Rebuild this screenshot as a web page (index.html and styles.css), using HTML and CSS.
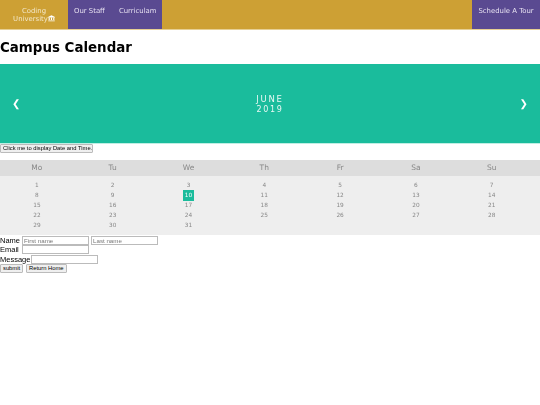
FILE: index.html
```html
<!DOCTYPE html>
<html lang="en">
<head>
<meta charset="utf-8">
<title>Campus Calendar</title>
<link rel="stylesheet" href="styles.css">
</head>
<body>
<nav class="nav">
  <a class="brand" href="#">Coding<br>University<svg class="bank" viewBox="0 0 16 14" width="7" height="6.5" aria-hidden="true"><path d="M8 0 L16 4 V5 H0 V4 Z M1.5 6 H4 V11 H1.5 Z M6.7 6 H9.3 V11 H6.7 Z M12 6 H14.5 V11 H12 Z M0.5 12 H15.5 V14 H0.5 Z"/></svg></a>
  <div class="links">
    <a href="#">Our Staff</a>
    <a href="#">Curriculam</a>
  </div>
  <div class="tour"><a href="#">Schedule A Tour</a></div>
</nav>
<h1 class="title">Campus Calendar</h1>
<section class="month">
  <span class="arrow">&#10094;</span>
  <div class="month-name">JUNE<br><span class="year">2019</span></div>
  <span class="arrow">&#10095;</span>
</section>
<button class="btn wide" type="button">Click me to display Date and Time.</button>
<div class="cal-days">
  <span>Mo</span><span>Tu</span><span>We</span><span>Th</span><span>Fr</span><span>Sa</span><span>Su</span>
</div>
<div class="cal-grid">
  <span>1</span><span>2</span><span>3</span><span>4</span><span>5</span><span>6</span><span>7</span>
  <span>8</span><span>9</span><span><b class="today">10</b></span><span>11</span><span>12</span><span>13</span><span>14</span>
  <span>15</span><span>16</span><span>17</span><span>18</span><span>19</span><span>20</span><span>21</span>
  <span>22</span><span>23</span><span>24</span><span>25</span><span>26</span><span>27</span><span>28</span>
  <span>29</span><span>30</span><span>31</span>
</div>
<form class="form">
  <div class="row"><label class="lbl lbl-name">Name</label><input class="field" placeholder="First name"><input class="field next" placeholder="Last name"></div>
  <div class="row"><label class="lbl lbl-email">Email</label><input class="field"></div>
  <div class="row"><label class="lbl lbl-msg">Message</label><input class="field"></div>
  <div class="row actions"><button class="btn" type="button">submit</button><button class="btn" type="button">Return Home</button></div>
</form>
</body>
</html>
```
FILE: styles.css
```css
* { box-sizing: border-box; }
body {
  margin: 0;
  font-family: "DejaVu Sans", sans-serif;
  background: #fff;
  color: #000;
  opacity: 0.999;
}
a { color: inherit; text-decoration: none; }
.nav {
  display: flex;
  height: 30px;
  background: #cda034;
  border-bottom: 1px solid #e6cf94;
  color: #e6e0f0;
  font-size: 6.9px;
  line-height: 11px;
}
.brand {
  width: 68px;
  padding-top: 7px;
  text-align: center;
  line-height: 8px;
  color: #f3e7c8;
}
.bank { fill: #fff; vertical-align: -0.5px; }
.links {
  display: flex;
  width: 94px;
  background: #5a4a91;
  padding: 6px 0 0 6px;
  gap: 14px;
}
.tour {
  margin-left: auto;
  width: 68px;
  background: #5a4a91;
  padding-top: 6px;
  text-align: center;
}
.title {
  margin: 0;
  height: 34px;
  padding-top: 9px;
  font-size: 13.4px;
  line-height: 18px;
  font-weight: 700;
}
.month {
  display: flex;
  justify-content: space-between;
  align-items: center;
  height: 80px;
  padding: 0 12px 1px;
  background: #1abc9c;
  border-bottom: 1px solid #bfeee3;
  color: #fff;
}
.arrow { font-size: 10px; }
.month-name {
  padding-top: 2px;
  font-size: 8.5px;
  line-height: 10px;
  letter-spacing: 1.7px;
  text-align: center;
  color: #e8f8f4;
}
.year { font-size: 8px; }
.btn {
  font-family: "Liberation Sans", sans-serif;
  font-size: 5.8px;
  height: 9px;
  line-height: 7px;
  padding: 0 2px;
  color: #000;
  background: #efefef;
  border: 1px solid #bbb;
  border-radius: 1px;
  white-space: nowrap;
}
.wide { display: block; width: 93px; margin: 0 0 7px; }
.cal-days, .cal-grid {
  display: grid;
  grid-template-columns: repeat(7, 75.8px);
  text-align: center;
  color: #888;
}
.cal-days span, .cal-grid span { padding-right: 2px; }
.cal-days {
  height: 16px;
  background: #ddd;
  font-size: 7.5px;
  line-height: 16px;
}
.cal-grid {
  height: 59px;
  padding-top: 4px;
  grid-auto-rows: 10.1px;
  background: #eee;
  font-size: 5.8px;
  line-height: 10px;
}
.today {
  display: inline-block;
  width: 11px;
  height: 11px;
  background: #1abc9c;
  color: #fff;
  font-weight: 400;
}
.form {
  font-family: "Liberation Sans", sans-serif;
  font-size: 7.5px;
  line-height: 9px;
}
.row { display: flex; height: 9.5px; white-space: nowrap; }
.row:first-child { margin-top: 0.5px; }
.lbl-name { width: 22px; }
.lbl-email { width: 21.5px; }
.lbl-msg { width: 31px; }
.field {
  width: 67px;
  height: 9px;
  padding: 0 1px;
  font-family: "Liberation Sans", sans-serif;
  font-size: 6.2px;
  border: 1px solid #bbb;
}
.next { margin-left: 2px; }
.actions { gap: 3px; height: 10px; }
.field::placeholder { color: #777; }
```
